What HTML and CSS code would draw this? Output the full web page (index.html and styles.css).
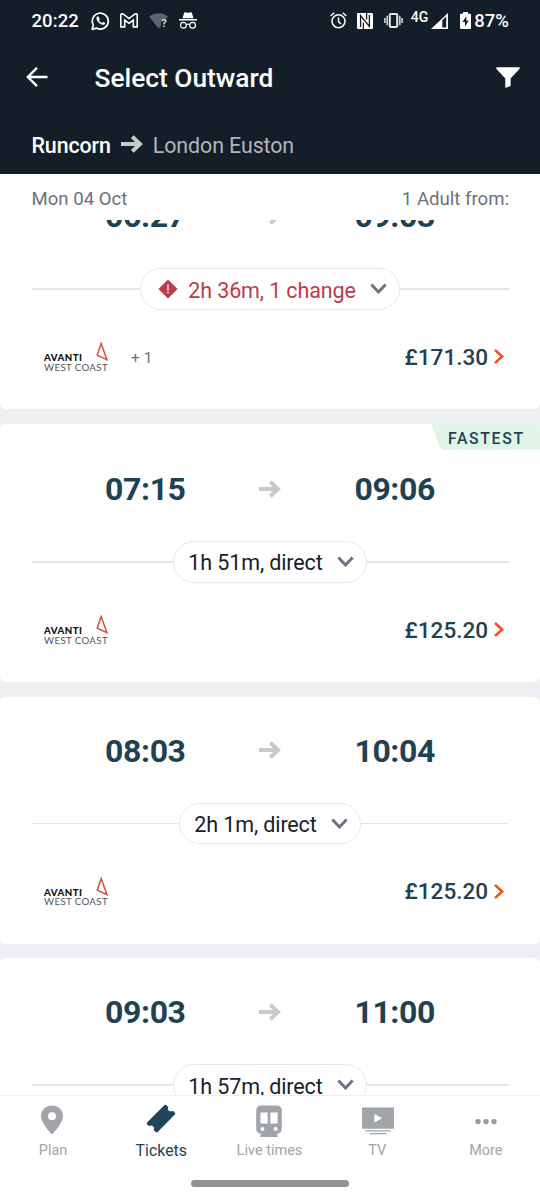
FILE: index.html
```html
<!DOCTYPE html>
<html lang="en">
<head>
<meta charset="utf-8">
<title>Select Outward</title>
<link rel="stylesheet" href="styles.css">
</head>
<body>
<svg class="defs" aria-hidden="true">
  <symbol id="arrow" viewBox="0 0 22 18"><path d="M0 9H19M11.3 1.6L19 9L11.3 16.4" fill="none" stroke="currentColor" stroke-width="4"/></symbol>
  <symbol id="chevron" viewBox="0 0 17 11"><path d="M1.4 1.4L8.5 9L15.6 1.4" fill="none" stroke="currentColor" stroke-width="2.9"/></symbol>
  <symbol id="next" viewBox="0 0 10 15"><path d="M1 1L8.2 7.5L1 14" fill="none" stroke="currentColor" stroke-width="2.5"/></symbol>
  <symbol id="avanti" viewBox="0 0 12 19"><path d="M5.2 1.6L1.2 13.2L10.9 17.6Z" fill="none" stroke="currentColor" stroke-width="1.5"/></symbol>
</svg>
<div class="app">
  <header class="top">
    <div class="status">
      <span class="clock">20:22</span>
      <svg class="whatsapp" viewBox="0 0 20 20"><path d="M1.2 18.8L2.5 14.3A8.4 8.4 0 1 1 5.8 17.5Z" fill="none" stroke="#fff" stroke-width="1.8" stroke-linejoin="round"/><path d="M7.2 5.1C5.8 5.6 5.3 7.2 6.3 9.1C7.6 11.7 9.7 13.4 12.3 14C13.7 14.3 15.1 13.2 14.9 12C14.2 11.4 13.3 11 12.7 11L11.6 12.2C10.1 11.6 9 10.6 8.3 9.2L9.1 8.2L8.2 5.5Z" fill="#fff"/></svg>
      <svg class="gmail" viewBox="0 0 18 15"><path d="M.8 13.9V2.2C.8 .7 2.2 .3 3.3 1.2L9 5.6L14.7 1.2C15.8 .3 17.2 .7 17.2 2.2V13.9H13.3V7L9 10.3L4.7 7V13.9Z" fill="none" stroke="#fff" stroke-width="1.6"/></svg>
      <svg class="wifi" viewBox="0 0 20 16"><path d="M0 3.6C5.8-1 13.2-1 19 3.6L16.7 6.2C13.7 5.5 12 7.5 12 10V13L9.5 15.5Z" fill="#5c646d"/><text x="12.2" y="14.2" class="wifi-mark">?</text></svg>
      <svg class="incognito" viewBox="0 0 18 17"><path d="M0 7.1H18V8.6H0ZM3.6 6.2L5.1 .8C5.4 .1 6.2 0 7 .4Q9 1 11 .4C11.8 0 12.6 .1 12.9 .8L14.4 6.2Z" fill="#fff"/><g fill="none" stroke="#fff" stroke-width="1.2"><circle cx="4.4" cy="13.2" r="2.9"/><circle cx="13.6" cy="13.2" r="2.9"/><path d="M7.2 12.7Q9 11.6 10.8 12.7"/></g></svg>
      <span class="spacer"></span>
      <svg class="alarm" viewBox="0 0 17 17"><g fill="none" stroke="#fff" stroke-width="1.5"><circle cx="8.5" cy="9.3" r="6.5"/><path d="M8.5 5.5V9.6L11 12M.6 4L4.2 .8M16.4 4L12.8 .8"/></g></svg>
      <svg class="nfc" viewBox="0 0 16 16"><rect width="16" height="16" rx="1.2" fill="#fff"/><path d="M3.6 14V2.6L12.4 13.4V2M6.4 16V9.5M9.6 0V6.5" fill="none" stroke="#141e28" stroke-width="1.3"/></svg>
      <svg class="vibrate" viewBox="0 0 19 15"><rect x="5.8" y="1" width="7.4" height="13" rx="1" fill="none" stroke="#e6e8e9" stroke-width="2"/><path d="M3.2 2.8V12.2M15.8 2.8V12.2M.9 5V10M18.1 5V10" stroke="#c6cacc" stroke-width="1.7"/></svg>
      <span class="net">4G</span>
      <svg class="signal" viewBox="0 0 17 16"><path d="M0 16L17 0V16Z" fill="#fff"/><path d="M11.3 7.2L15.2 3.5V14.4H11.3Z" fill="#141e28"/></svg>
      <svg class="battery" viewBox="0 0 11 17"><path d="M3 0H8V1.8H10Q11 1.8 11 2.8V16Q11 17 10 17H1Q0 17 0 16V2.8Q0 1.8 1 1.8H3Z" fill="#fff"/><path d="M6.3 4.2L2.5 10.1H5V14.7L8.6 8.6H6.3Z" fill="#141e28"/></svg>
      <span class="percent">87%</span>
    </div>
    <div class="titlebar">
      <svg class="back" viewBox="0 0 22 20"><path d="M21.5 10H2M11 .8L1.8 10L11 19.2" fill="none" stroke="#fff" stroke-width="2.4"/></svg>
      <h1>Select Outward</h1>
      <svg class="filter" viewBox="0 0 24 21"><path d="M1 .3H23Q24.4 .5 23.4 2L14.6 11.4V19L9.9 20.8Q9.3 21 9.3 20.3V11.4L.5 2Q-.3 .5 1 .3Z" fill="#fff"/></svg>
    </div>
    <div class="route">
      <span class="from">Runcorn</span>
      <svg class="route-arrow"><use href="#arrow"/></svg>
      <span class="to">London Euston</span>
    </div>
  </header>
  <div class="subhead"><span>Mon 04 Oct</span><span>1 Adult from:</span></div>
  <main class="list">
    <div class="cards">
      <article class="card">
        <div class="times"><b>06:27</b><svg><use href="#arrow"/></svg><b>09:03</b></div>
        <div class="duration">
          <div class="pill warn"><svg class="alert" viewBox="0 0 20 20"><path d="M10 .4L19.6 10L10 19.6L.4 10Z" fill="#bd3a4a"/><path d="M10 5.4V11.4M10 12.8V14.4" stroke="#f4d9dc" stroke-width="1.6"/></svg><span>2h 36m, 1 change</span><svg class="chev"><use href="#chevron"/></svg></div>
        </div>
        <div class="fare">
          <div class="operator"><div class="names"><b>AVANTI</b><span>WEST COAST</span></div><svg><use href="#avanti"/></svg></div>
          <span class="extra">+ 1</span>
          <span class="price">£171.30</span><svg class="next"><use href="#next"/></svg>
        </div>
      </article>
      <article class="card fastest">
        <div class="tag">FASTEST</div>
        <div class="times"><b>07:15</b><svg><use href="#arrow"/></svg><b>09:06</b></div>
        <div class="duration"><div class="pill"><span>1h 51m, direct</span><svg class="chev"><use href="#chevron"/></svg></div></div>
        <div class="fare">
          <div class="operator"><div class="names"><b>AVANTI</b><span>WEST COAST</span></div><svg><use href="#avanti"/></svg></div>
          <span class="price">£125.20</span><svg class="next"><use href="#next"/></svg>
        </div>
      </article>
      <article class="card">
        <div class="times"><b>08:03</b><svg><use href="#arrow"/></svg><b>10:04</b></div>
        <div class="duration"><div class="pill"><span>2h 1m, direct</span><svg class="chev"><use href="#chevron"/></svg></div></div>
        <div class="fare">
          <div class="operator"><div class="names"><b>AVANTI</b><span>WEST COAST</span></div><svg><use href="#avanti"/></svg></div>
          <span class="price">£125.20</span><svg class="next"><use href="#next"/></svg>
        </div>
      </article>
      <article class="card">
        <div class="times"><b>09:03</b><svg><use href="#arrow"/></svg><b>11:00</b></div>
        <div class="duration"><div class="pill"><span>1h 57m, direct</span><svg class="chev"><use href="#chevron"/></svg></div></div>
      </article>
    </div>
  </main>
  <footer class="bottom">
    <nav class="tabs">
      <a class="tab plan"><svg width="24" height="36" viewBox="0 0 24 36"><path d="M12 3.5C5.8 3.5 1 8.2 1 14C1 21.5 12 32.5 12 32.5S23 21.5 23 14C23 8.2 18.2 3.5 12 3.5ZM12 10.3A4 4 0 1 1 12 18.3A4 4 0 1 1 12 10.3Z" fill="#a1a4a9" fill-rule="evenodd"/></svg><span>Plan</span></a>
      <a class="tab active"><svg width="30" height="36" viewBox="0 0 30 36"><path d="M18.3 3.2Q19.4 2.2 20.5 3.2L22.2 4.9Q21.2 7.8 23.4 9Q25.2 9.8 27 8.8L28.9 10.8Q29.7 11.7 28.8 12.6L11.7 29.9Q10.6 31 9.6 29.9L7.6 28Q9 25 6.8 23.9Q5 23.2 3 24.2L1.1 22.2Q.3 21.3 1.3 20.3Z" fill="#1f4658"/></svg><span>Tickets</span></a>
      <a class="tab"><svg width="26" height="36" viewBox="0 0 26 36"><path d="M6 3.5H20Q25.8 3.5 25.8 8.7V26.5Q25.8 31.5 21 31.8L22 35H4L5 31.8Q.2 31.5 .2 26.5V8.7Q.2 3.5 6 3.5Z" fill="#a1a4a9"/><path d="M4.4 10.4H11.6V21.4H4.4ZM14.4 10.4H21.6V21.4H14.4Z" fill="#fff"/><circle cx="6.4" cy="27" r="2" fill="#fff"/><circle cx="19.6" cy="27" r="2" fill="#fff"/></svg><span>Live times</span></a>
      <a class="tab tv"><svg width="32" height="36" viewBox="0 0 32 36"><path d="M0 5.5H32V26.8H0ZM3 28.2H29V29.4H3ZM7.5 31H24.5V32.2H7.5Z" fill="#a1a4a9"/><path d="M12.3 12L20.2 16.2L12.3 20.4Z" fill="#fff"/></svg><span>TV</span></a>
      <a class="tab"><svg width="24" height="36" viewBox="0 0 24 36"><g fill="#9599a0"><circle cx="4" cy="19.6" r="2.7"/><circle cx="12" cy="19.6" r="2.7"/><circle cx="20" cy="19.6" r="2.7"/></g></svg><span>More</span></a>
    </nav>
    <div class="home"></div>
  </footer>
</div>
</body>
</html>
```
FILE: styles.css
```css
* { box-sizing: border-box; }
body { margin: 0; font-family: Roboto, "Liberation Sans", sans-serif; background: #fff; }
svg { display: block; flex: none; }
.defs { display: none; }
.app { width: 540px; height: 1200px; display: flex; flex-direction: column; overflow: hidden; }

.top { flex: none; height: 174px; background: #141e28; color: #fff; }
.status { height: 41px; display: flex; align-items: center; padding: 0 31px 0 31.5px; font-size: 18.5px; font-weight: 500; }
.clock { letter-spacing: .1px; }
.whatsapp { width: 19px; height: 20px; margin-left: 12px; }
.gmail { width: 18px; height: 15px; margin-left: 10px; }
.wifi { width: 20px; height: 16px; margin-left: 11px; }
.wifi-mark { font: 700 11px Roboto, sans-serif; fill: #d5d8da; }
.incognito { width: 18px; height: 17px; margin-left: 10px; }
.spacer { flex: 1; }
.alarm { width: 17px; height: 17px; }
.nfc { width: 16px; height: 16px; margin-left: 10px; }
.vibrate { width: 19px; height: 15px; margin-left: 11px; }
.net { font-size: 14px; font-weight: 500; line-height: 14px; margin: 0 3px 8px 8px; }
.signal { width: 17px; height: 16px; }
.battery { width: 11px; height: 17px; margin: 0 3px 0 12px; }

.titlebar { height: 73px; display: flex; align-items: center; padding: 0 20px 0 26px; border-bottom: 1px solid #111a23; }
.back { width: 22px; height: 20px; }
h1 { flex: 1; margin: 1px 0 0 46.5px; font-size: 26.3px; font-weight: 500; line-height: 30px; }
.filter { width: 24px; height: 21px; }
.route { height: 60px; display: flex; align-items: center; padding: 3px 31.5px 0; font-size: 21.4px; letter-spacing: -.1px; }
.from { font-weight: 500; }
.to { color: #b2b5ba; }
.route-arrow { width: 22px; height: 18px; margin: -3px 10px 0; color: #c9caca; }

.subhead { flex: none; height: 46px; display: flex; justify-content: space-between; padding: 13px 31px 0 31.5px; font-size: 18.6px; line-height: 24px; color: #6d717c; }
.list { flex: 1; min-height: 0; overflow: hidden; background: #eeeff2; }
.cards { display: flex; flex-direction: column; gap: 14.7px; margin-top: -57.6px; }
.card { position: relative; flex: none; height: 247px; border-radius: 6px; background: #fff; overflow: hidden; }
.times { height: 106px; display: grid; grid-template-columns: repeat(3, 1fr); place-items: center; padding: 2px 83px 0; color: #1f4252; }
.times b { font-size: 32px; line-height: 38px; letter-spacing: -.4px; }
.times svg { width: 22px; height: 18px; margin-top: -1px; color: #c9c9c9; }
.duration { height: 41.5px; display: flex; align-items: center; padding: 0 31.5px; }
.duration::before, .duration::after { content: ""; flex: 1; height: 1.5px; background: #e4e5e7; }
.pill { height: 41.5px; display: flex; align-items: center; padding: 2px 12px 0 14.5px; border: 1.5px solid #e8e9eb; border-radius: 21px; font-size: 21.5px; letter-spacing: -.12px; color: #18202b; }
.chev { width: 17px; height: 11px; margin: -3px 0 0 14.5px; color: #6c717f; }
.warn { color: #bd3a4a; padding-left: 17px; }
.alert { width: 20px; height: 20px; margin: -2px 10.5px 0 0; }
.fare { height: 99.5px; display: flex; align-items: center; padding: 0 36px 4.5px 44px; color: #1f4252; }
.operator { display: flex; width: 64px; position: relative; padding-top: 11px; }
.operator svg { position: absolute; right: 0; top: 0; width: 12px; height: 19px; color: #dc4b36; }
.names { display: flex; flex-direction: column; font-family: Lato, sans-serif; font-size: 9.7px; line-height: 9.5px; color: #555; white-space: nowrap; }
.names b { font-weight: 900; color: #111; letter-spacing: .5px; }
.names span { letter-spacing: .38px; }
.extra { margin-left: 23px; padding-top: 1px; font-size: 15.5px; color: #6d717c; }
.price { margin: -1px 0 0 auto; font-size: 22.5px; font-weight: 500; }
.next { width: 10px; height: 15px; margin: -1px 0 0 6px; color: #f24e1e; }
.fastest { height: 258px; padding-top: 11px; }
.tag { position: absolute; right: 0; top: 0; width: 109px; height: 26px; padding: 2px 0 0 17px; background: #e0f5e7; clip-path: polygon(0 0, 100% 0, 100% 100%, 12px 100%, 9px 23px); font-size: 15.8px; line-height: 26px; font-weight: 500; letter-spacing: 1.65px; color: #1f4252; }

.bottom { flex: none; height: 105.5px; border-top: 1px solid #ededef; background: #fff; }
.tabs { display: flex; margin-left: -1px; padding-top: 6px; }
.tab { width: 108.2px; display: flex; flex-direction: column; align-items: center; font-size: 14.5px; color: #a1a4a9; }
.tab span { line-height: 20px; margin-top: 3px; }
.plan svg { margin-right: 2px; }
.tv span { margin-right: 1px; }
.active span { font-size: 15.8px; color: #1f4252; letter-spacing: .05px; }
.home { width: 158px; height: 6.5px; margin: 19.5px auto 0; border-radius: 4px; background: #939393; }
```
